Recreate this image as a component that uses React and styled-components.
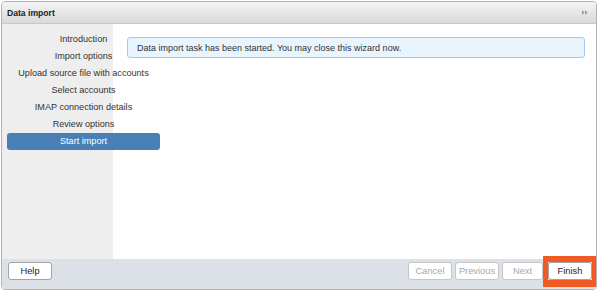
import React from "react";
import styled, { createGlobalStyle } from "styled-components";

const Global = createGlobalStyle`
  html, body { margin: 0; padding: 0; background: #ffffff; }
  body { font-family: "Liberation Sans", Arial, sans-serif; }
  * { box-sizing: border-box; }
`;

const Window = styled.div`
  margin: 1px 0 0 1px;
  width: 596px;
  height: 289px;
  border: 1px solid #b3b3b3;
  border-radius: 4px;
  display: flex;
  flex-direction: column;
  overflow: hidden;
  background: #fff;
`;

const Header = styled.div`
  height: 22px;
  flex: none;
  display: flex;
  align-items: center;
  justify-content: space-between;
  padding: 0 8px 0 5px;
  background: linear-gradient(#f4f4f4, #d9d9d9);
  border-bottom: 1px solid #c8c8c8;
`;

const Title = styled.div`
  font-size: 8.6px;
  font-weight: bold;
  color: #222;
`;

const Body = styled.div`
  flex: 1;
  display: flex;
  min-height: 0;
`;

const Nav = styled.div`
  position: relative;
  z-index: 1;
  width: 111px;
  flex: none;
  background: #eeeeee;
  padding: 7px 0 0 5px;
  display: flex;
  flex-direction: column;
`;

const NavItem = styled.div`
  width: 153px;
  height: 17px;
  line-height: 17px;
  text-align: center;
  font-size: 9.1px;
  color: ${(p) => (p.$active ? "#ffffff" : "#333333")};
  background: ${(p) => (p.$active ? "#4880b6" : "transparent")};
  border-radius: 3px;
  white-space: nowrap;
`;

const Content = styled.div`
  flex: 1;
  background: #ffffff;
  padding: 13px 11px 0 14px;
`;

const Message = styled.div`
  height: 21px;
  display: flex;
  align-items: center;
  padding-left: 9px;
  background: #e8f4fe;
  border: 1px solid #a6c8ef;
  border-radius: 3px;
  font-size: 9px;
  color: #333;
`;

const Footer = styled.div`
  height: 30px;
  flex: none;
  background: #dce0e7;
  display: flex;
  align-items: flex-start;
  padding: 3px 4px 0 6px;
`;

const Spacer = styled.div`
  flex: 1;
`;

const Button = styled.button`
  display: block;
  height: 18px;
  width: ${(p) => p.$w}px;
  margin-left: ${(p) => p.$ml || 0}px;
  padding: 0;
  font-family: "Liberation Sans", Arial, sans-serif;
  font-size: 9.3px;
  color: ${(p) => (p.disabled ? "#a8a8a8" : "#222")};
  background: #fff;
  border: 1px solid ${(p) => (p.disabled ? "#c6c6c6" : "#a3a3a3")};
  border-radius: 3px;
`;

const Highlight = styled.div`
  position: relative;
  margin-left: 5px;
  &::after {
    content: "";
    position: absolute;
    top: -6px;
    bottom: -7px;
    left: -5px;
    right: -5px;
    border: solid #f15a22;
    border-width: 6px 5px 7px 5px;
    pointer-events: none;
  }
`;

const Arrows = () => (
  <svg width="6" height="5" viewBox="0 0 6 5">
    <path d="M0 0 L2.5 2.5 L0 5 Z M3 0 L5.5 2.5 L3 5 Z" fill="#9a9a9a" />
  </svg>
);

const steps = [
  "Introduction",
  "Import options",
  "Upload source file with accounts",
  "Select accounts",
  "IMAP connection details",
  "Review options",
  "Start import",
];

export default function App() {
  return (
    <>
      <Global />
      <Window>
        <Header>
          <Title>Data import</Title>
          <Arrows />
        </Header>
        <Body>
          <Nav>
            {steps.map((s, i) => (
              <NavItem key={s} $active={i === steps.length - 1}>
                {s}
              </NavItem>
            ))}
          </Nav>
          <Content>
            <Message>
              Data import task has been started. You may close this wizard now.
            </Message>
          </Content>
        </Body>
        <Footer>
          <Button $w={44}>Help</Button>
          <Spacer />
          <Button $w={44} disabled>Cancel</Button>
          <Button $w={44} $ml={3} disabled>Previous</Button>
          <Button $w={41} $ml={3} disabled>Next</Button>
          <Highlight>
            <Button $w={44}>Finish</Button>
          </Highlight>
        </Footer>
      </Window>
    </>
  );
}
